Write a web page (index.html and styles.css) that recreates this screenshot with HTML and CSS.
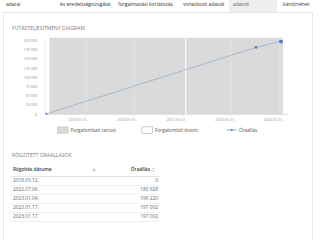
FILE: index.html
```html
<!DOCTYPE html>
<html lang="hu">
<head>
<meta charset="utf-8">
<link rel="stylesheet" href="styles.css">
</head>
<body>
<nav class="tabs">
  <div class="tab tab-1">adatai</div>
  <div class="tab tab-2">és eredetiségvizsgálat</div>
  <div class="tab tab-3">forgalmazási korlátozás</div>
  <div class="tab tab-4">vonatkozó adatok</div>
  <div class="tab tab-5 active">adatok</div>
  <div class="tab tab-6">kártörténet</div>
</nav>
<main class="card">
  <h2 class="section-title first">Futásteljesítmény diagram</h2>
  <svg class="chart" width="308" height="106" viewBox="4 34 308 106">
    <g class="ylabels">
      <text x="37" y="41.8">200 000</text>
      <text x="37" y="51">175 000</text>
      <text x="37" y="60.2">150 000</text>
      <text x="37" y="69.5">125 000</text>
      <text x="37" y="78.7">100 000</text>
      <text x="37" y="87.9">75 000</text>
      <text x="37" y="97.1">50 000</text>
      <text x="37" y="106.4">25 000</text>
      <text x="37" y="115.6">0</text>
    </g>
    <rect x="49.5" y="37.7" width="233.5" height="76.3" fill="#dadada"/>
    <g class="grid">
      <line x1="86" y1="37.7" x2="86" y2="114"/>
      <line x1="134" y1="37.7" x2="134" y2="114"/>
      <line x1="231" y1="37.7" x2="231" y2="114"/>
      <line x1="280" y1="37.7" x2="280" y2="114"/>
    </g>
    <rect x="185.2" y="37.7" width="1.2" height="76.3" fill="#ffffff"/>
    <line x1="45" y1="38" x2="45" y2="114.3" stroke="#d4d4d4" stroke-width="0.5"/>
    <line x1="45" y1="114.3" x2="288" y2="114.3" stroke="#c4c4c4" stroke-width="0.6"/>
    <g class="ticks">
      <line x1="86" y1="114.3" x2="86" y2="116"/>
      <line x1="134" y1="114.3" x2="134" y2="116"/>
      <line x1="183" y1="114.3" x2="183" y2="116"/>
      <line x1="231" y1="114.3" x2="231" y2="116"/>
      <line x1="280" y1="114.3" x2="280" y2="116"/>
    </g>
    <g class="xlabels">
      <text x="78" y="120.5">2019.01.01.</text>
      <text x="127" y="120.5">2020.01.01.</text>
      <text x="176.5" y="120.5">2021.01.01.</text>
      <text x="225" y="120.5">2022.01.01.</text>
      <text x="273.5" y="120.5">2023.01.01.</text>
    </g>
    <polyline points="46,114 256,47.4 278,41.9 281,41.6" fill="none" stroke="#7f9dc4" stroke-width="0.6"/>
    <g class="marks">
      <circle cx="46.3" cy="113.8" r="1"/>
      <circle cx="256" cy="47.4" r="1.3"/>
      <rect x="279" y="40" width="4" height="3.2" rx="1.2"/>
    </g>
    <g class="legend">
      <rect x="57.5" y="126.9" width="10.6" height="6.3" fill="#d9d9d9" stroke="#b8b8b8" stroke-width="0.5"/>
      <text x="70.8" y="131.7">Forgalomban tartott</text>
      <rect x="141.9" y="126.9" width="10.6" height="6.3" fill="#ffffff" stroke="#9a9a9a" stroke-width="0.5"/>
      <text x="155" y="131.7">Forgalomból kivont</text>
      <line x1="226.7" y1="130" x2="236.7" y2="130" stroke="#7f9dc4" stroke-width="0.8"/>
      <circle cx="231.7" cy="130" r="1.1" fill="#4f7fbf"/>
      <text x="239" y="131.7">Óraállás</text>
    </g>
  </svg>
  <h2 class="section-title second">Rögzített óraállások</h2>
  <table class="readings">
    <thead>
      <tr>
        <th class="col-date">
          <span class="th-inner">Rögzítés dátuma
            <svg class="sort-up" width="4" height="3" viewBox="0 0 4 3"><path d="M0 3 L2 0 L4 3 Z"/></svg>
          </span>
        </th>
        <th class="col-value">
          <span class="th-inner th-right">Óraállás
            <svg class="sort-both" width="3" height="5" viewBox="0 0 3 5"><path d="M0 2 L1.5 0 L3 2 Z M0 3 L1.5 5 L3 3 Z"/></svg>
          </span>
        </th>
      </tr>
    </thead>
    <tbody>
      <tr><td>2018.03.12.</td><td class="num">0</td></tr>
      <tr><td>2022.07.06.</td><td class="num">180 928</td></tr>
      <tr><td>2023.01.04.</td><td class="num">196 220</td></tr>
      <tr><td>2023.01.17.</td><td class="num">197 002</td></tr>
      <tr><td>2023.01.17.</td><td class="num">197 002</td></tr>
    </tbody>
  </table>
</main>
</body>
</html>
```
FILE: styles.css
```css
* { box-sizing: border-box; }
html, body {
  margin: 0;
  padding: 0;
  background: #ffffff;
  font-family: "Open Sans", "DejaVu Sans", sans-serif;
  color: #555555;
}
body { width: 320px; height: 240px; overflow: hidden; }

.tabs {
  display: flex;
  height: 12px;
  padding-left: 2px;
}
.tab {
  font-size: 5px;
  line-height: 6px;
  padding: 1.4px 0 0 4px;
  color: #333333;
  white-space: nowrap;
}
.tab-1 { width: 54px; }
.tab-2 { width: 58px; }
.tab-3 { width: 65px; }
.tab-4 { width: 50px; }
.tab-5 { width: 48px; }
.tab-6 { margin-left: 2px; }
.tab.active {
  background: #efefef;
  color: #666666;
}

.card {
  margin: 0 7px 0 3px;
  border: 1px solid #e8e8e8;
  height: 240px;
}
.section-title {
  margin: 0;
  padding-left: 8px;
  font-size: 5px;
  line-height: 6px;
  font-weight: 400;
  text-transform: uppercase;
  color: #7a7a7a;
  letter-spacing: 0.05px;
}
.section-title.first { margin-top: 12px; margin-bottom: 3px; }
.section-title.second { margin-top: 12px; }

.chart { display: block; }
.chart text { font-family: "Open Sans", sans-serif; }
.ylabels text { font-size: 3.6px; fill: #8a8a8a; text-anchor: end; }
.xlabels text { font-size: 3.6px; fill: #8a8a8a; text-anchor: middle; }
.legend text { font-size: 4.8px; fill: #555555; }
.grid line { stroke: #ffffff; stroke-opacity: 0.35; stroke-width: 0.8; }
.ticks line { stroke: #c4c4c4; stroke-width: 0.5; }
.marks circle, .marks rect { fill: #4f7fbf; }

.readings {
  margin: 7px 0 0 6px;
  width: 149px;
  border-collapse: collapse;
  font-size: 4.8px;
  line-height: 6px;
}
.readings th {
  font-weight: 600;
  color: #3a3a3a;
  padding: 1px 3px 4px;
  border-bottom: 1px solid #e4e4e4;
  text-align: left;
}
.readings .col-date { width: 90px; }
.th-inner {
  display: flex;
  align-items: center;
  justify-content: space-between;
}
.th-right { justify-content: flex-end; gap: 2px; }
.readings .col-value { padding-right: 4px; }
.sort-up { fill: #c8c8c8; margin-right: 1px; }
.sort-both { fill: #cfcfcf; }
.readings td {
  padding: 0 3px 2px;
  border-bottom: 1px solid #f0f0f0;
  color: #666666;
}
.readings td.num { text-align: right; padding-right: 1px; }
```
